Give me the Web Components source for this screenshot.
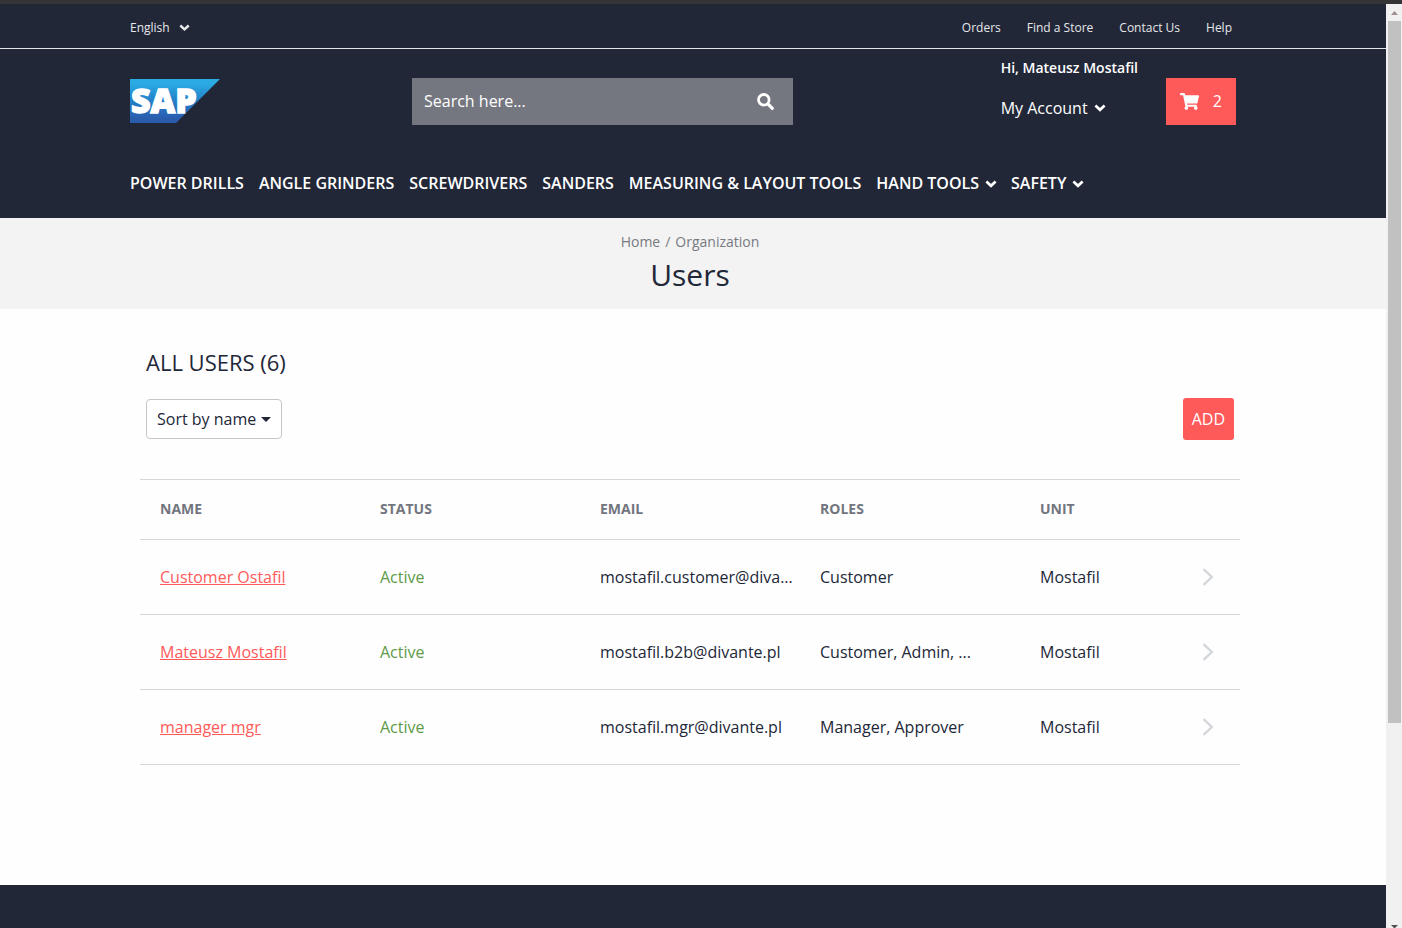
<!DOCTYPE html>
<html lang="en">
<head>
<meta charset="utf-8">
<meta name="viewport" content="width=device-width, initial-scale=1">
<title>Users</title>
<style>
  body {
    margin: 0;
    background: #fefefe;
    color: #222738;
    font: 400 16px/24px "Open Sans", "Noto Sans", sans-serif;
    --dark: #222738;
    --accent: #ff5a5a;
    --line: #d3d6db;
    --page: 1120px;
    --trim: 6px;
  }
</style>
</head>
<body>
<store-app></store-app>

<script>
const define = (name, html) => {
  const template = document.createElement('template');
  template.innerHTML = html;
  customElements.define(name, class extends HTMLElement {
    constructor() {
      super();
      this.attachShadow({ mode: 'open' }).append(template.content.cloneNode(true));
    }
  });
};

define('icon-chevron', `
<style>
  :host { display: inline-flex; flex: none; width: 12px; }
  svg { display: block; width: 100%; }
</style>
<svg viewBox="0 0 12 8" aria-hidden="true"><path d="M1.4 1.6 6 5.8 10.6 1.6" fill="none" stroke="currentColor" stroke-width="2.7"/></svg>`);

define('sap-logo', `
<style>
  :host { display: block; }
  a, svg { display: block; width: 90px; height: 44px; overflow: visible; }
  text { font: 800 34px "Open Sans", sans-serif; }
</style>
<a href="#" aria-label="Home">
<svg viewBox="0 0 90 44">
  <defs><linearGradient id="g" x1="0" y1="0" x2="0" y2="1">
    <stop offset="0.1" stop-color="#2aabe4"/><stop offset="0.5" stop-color="#2380c8"/><stop offset="0.9" stop-color="#2a5cae"/>
  </linearGradient></defs>
  <path d="M0 0H90L46 44H0Z" fill="url(#g)"/>
  <text x="1" y="34" fill="#fff" stroke="#fff" stroke-width="1.4">SAP</text>
</svg></a>`);

define('top-bar', `
<style>
  :host { display: block; padding-right: var(--trim); border-bottom: 1px solid #e4e5e8; font-size: 12px; line-height: 20px; color: #e6e7ea; }
  .row { display: flex; align-items: center; max-width: var(--page); height: 44px; margin: 0 auto; padding-top: 4px; box-sizing: border-box; }
  .lang { display: grid; align-items: center; }
  .lang > * { grid-area: 1 / 1; }
  .lang icon-chevron { justify-self: end; width: 11px; pointer-events: none; }
  select { appearance: none; border: 0; padding: 0 20px 0 0; background: none; color: inherit; font: inherit; }
  option { color: #222738; }
  nav { display: flex; gap: 26px; margin-left: auto; padding-right: 18px; }
  a { color: inherit; text-decoration: none; }
</style>
<div class="row">
  <div class="lang">
    <select aria-label="Language"><option>English</option></select>
    <icon-chevron></icon-chevron>
  </div>
  <nav aria-label="Service">
    <a href="#">Orders</a><a href="#">Find a Store</a><a href="#">Contact Us</a><a href="#">Help</a>
  </nav>
</div>`);

define('search-box', `
<style>
  :host { display: block; }
  form { display: flex; height: 47px; background: #757780; }
  input { flex: 1; min-width: 0; border: 0; padding: 0 12px 2px; background: none; color: #fff; font: inherit; outline: 0; }
  input::placeholder { color: #fff; opacity: 1; }
  button { width: 55px; border: 0; padding: 0; background: none; color: #fff; display: grid; place-items: center; }
  svg { width: 17px; height: 17px; }
</style>
<form role="search">
  <input type="text" placeholder="Search here..." aria-label="Search">
  <button type="button" aria-label="Search">
    <svg viewBox="0 0 17 17"><circle cx="6.8" cy="6.8" r="5.3" fill="none" stroke="currentColor" stroke-width="2.8"/><path d="m11 11 4.3 4.3" stroke="currentColor" stroke-width="3.2" stroke-linecap="round"/></svg>
  </button>
</form>`);

define('account-menu', `
<style>
  :host { display: block; color: #fff; }
  strong { display: block; font-weight: 600; font-size: 14px; }
  button { display: flex; align-items: center; gap: 6px; margin-top: 16px; border: 0; padding: 0; background: none; color: inherit; font: inherit; }
</style>
<strong><slot></slot></strong>
<button type="button">My Account <icon-chevron></icon-chevron></button>`);

define('mini-cart', `
<style>
  :host { display: block; }
  a { display: flex; align-items: center; justify-content: space-between; box-sizing: border-box; width: 70px; height: 47px; padding: 0 14px 1px; background: var(--accent); color: #fff; text-decoration: none; }
  svg { width: 19px; height: 17px; }
</style>
<a href="#" aria-label="Cart">
  <svg viewBox="0 0 576 512"><path fill="currentColor" d="M528.12 301.319l47.273-208C578.806 78.301 567.391 64 551.99 64H159.208l-9.166-44.81C147.758 8.021 137.93 0 126.529 0H24C10.745 0 0 10.745 0 24v16c0 13.255 10.745 24 24 24h69.883l70.248 343.435C147.325 417.1 136 435.222 136 456c0 30.928 25.072 56 56 56s56-25.072 56-56c0-15.674-6.447-29.835-16.824-40h209.647C430.447 426.165 424 440.326 424 456c0 30.928 25.072 56 56 56s56-25.072 56-56c0-22.172-12.888-41.332-31.579-50.405l5.517-24.276c3.413-15.018-8.002-29.319-23.403-29.319H218.117l-6.545-32h293.145c11.206 0 20.92-7.754 23.403-18.681z"/></svg>
  <span><slot></slot></span>
</a>`);

define('category-nav', `
<style>
  :host { display: block; color: #fff; font-weight: 600; }
  nav { display: flex; flex-wrap: wrap; gap: 0 15px; }
  a { display: flex; align-items: center; gap: 6px; color: inherit; text-decoration: none; }
  icon-chevron { margin-right: -1px; padding-top: 2px; }
</style>
<nav aria-label="Categories">
  <a href="#">POWER DRILLS</a><a href="#">ANGLE GRINDERS</a><a href="#">SCREWDRIVERS</a><a href="#">SANDERS</a>
  <a href="#">MEASURING &amp; LAYOUT TOOLS</a>
  <a href="#">HAND TOOLS <icon-chevron></icon-chevron></a><a href="#">SAFETY <icon-chevron></icon-chevron></a>
</nav>`);

define('store-header', `
<style>
  :host { display: block; background: var(--dark); }
  .body { padding-right: var(--trim); }
  .wrap { max-width: var(--page); margin: 0 auto; padding: 7px 0 23px; }
  .row { display: flex; align-items: flex-start; padding-right: 14px; }
  sap-logo { flex: 0 0 282px; padding-top: 23px; }
  search-box { flex: 0 1 381px; padding-top: 22px; }
  account-menu { margin-left: auto; }
  mini-cart { margin-left: 28px; padding-top: 22px; }
  category-nav { margin-top: 46px; }
</style>
<top-bar></top-bar>
<div class="body"><div class="wrap">
  <div class="row">
    <sap-logo></sap-logo>
    <search-box></search-box>
    <account-menu>Hi, Mateusz Mostafil</account-menu>
    <mini-cart>2</mini-cart>
  </div>
  <category-nav></category-nav>
</div></div>`);

define('page-title', `
<style>
  :host { display: block; padding: 14px var(--trim) 13px 0; background: #f3f3f3; text-align: center; }
  nav { display: flex; justify-content: center; gap: 5px; font-size: 14px; line-height: 20px; color: #777a81; }
  a { color: inherit; text-decoration: none; }
  h1 { margin: 2px 0 0; font-size: 30px; line-height: 42px; font-weight: 400; }
</style>
<nav aria-label="Breadcrumb"><a href="#">Home</a><span>/</span><a href="#">Organization</a></nav>
<h1><slot></slot></h1>`);

define('list-toolbar', `
<style>
  :host { display: block; padding: 0 6px; }
  h2 { margin: 0; font-size: 22px; line-height: 32px; font-weight: 400; }
  .row { display: flex; align-items: center; justify-content: space-between; margin-top: 20px; }
  .sort { display: grid; align-items: center; }
  .sort > * { grid-area: 1 / 1; }
  select { appearance: none; height: 40px; border: 1px solid #c4c6cb; border-radius: 4px; padding: 0 24px 0 10px; background: #fff; color: inherit; font: inherit; }
  svg { justify-self: end; width: 10px; height: 5px; margin-right: 11px; pointer-events: none; }
  button { height: 42px; border: 0; border-radius: 3px; padding: 0 9px; background: var(--accent); color: #fff; font: inherit; }
</style>
<h2><slot></slot></h2>
<div class="row">
  <div class="sort">
    <select aria-label="Sort"><option>Sort by name</option></select>
    <svg viewBox="0 0 10 5" aria-hidden="true"><path d="M0 0H10L5 5Z" fill="#222738"/></svg>
  </div>
  <button type="button">ADD</button>
</div>`);

customElements.define('user-table', class extends HTMLElement {
  connectedCallback() {
    const users = [
      ['Customer Ostafil', 'mostafil.customer@diva...', 'Customer'],
      ['Mateusz Mostafil', 'mostafil.b2b@divante.pl', 'Customer, Admin, ...'],
      ['manager mgr', 'mostafil.mgr@divante.pl', 'Manager, Approver']
    ];
    const rows = users.map(([name, email, roles]) => `
      <tr><td><a href="#">${name}</a></td><td class="active">Active</td><td>${email}</td><td>${roles}</td><td>Mostafil</td>
      <td class="go"><a href="#" aria-label="Open ${name}"><svg viewBox="0 0 12 18"><path d="m1.5 1.2 8.3 7.8-8.3 7.8" fill="none" stroke="#d3d6db" stroke-width="2.4"/></svg></a></td></tr>`).join('');
    this.attachShadow({ mode: 'open' }).innerHTML = `
<style>
  :host { display: block; }
  table { width: 100%; table-layout: fixed; border-collapse: collapse; border-top: 1px solid var(--line); }
  tr { border-bottom: 1px solid var(--line); }
  th, td { padding: 0 0 0 20px; text-align: left; white-space: nowrap; }
  th { width: 20%; height: 60px; padding-bottom: 2px; box-sizing: border-box; font-size: 14px; font-weight: 700; color: #72757e; }
  th:nth-child(5) { width: auto; }
  th:last-child { width: 58px; }
  td { height: 74px; }
  a { color: var(--accent); }
  .active { color: #5f9a48; }
  .go a, svg { display: block; width: 12px; height: 18px; }
</style>
<table>
  <thead><tr><th>NAME</th><th>STATUS</th><th>EMAIL</th><th>ROLES</th><th>UNIT</th><th></th></tr></thead>
  <tbody>${rows}</tbody>
</table>`;
  }
});

define('page-scrollbar', `
<style>
  :host { display: flex; flex-direction: column; align-items: center; flex: none; width: 16px; background: #f1f1f1; }
  svg { display: block; flex: none; }
  .up { width: 7px; height: 4px; margin: 7px 0 6px; }
  .track { flex: 1; width: 13px; }
  .thumb { height: 77.6%; background: #c1c1c1; }
  .down { width: 7px; height: 3px; }
</style>
<svg class="up" viewBox="0 0 7 4"><path d="M0 4 3.5 0 7 4Z" fill="#a38f8f"/></svg>
<div class="track"><div class="thumb"></div></div>
<svg class="down" viewBox="0 0 7 3"><path d="M0 0H7L4 3H3Z" fill="#505050"/></svg>`);

define('store-app', `
<style>
  :host { display: flex; box-sizing: border-box; min-height: 100vh; border-top: 4px solid #353537; }
  .page { flex: 1; min-width: 0; display: flex; flex-direction: column; }
  main { padding: 37px var(--trim) 0 0; }
  .wrap { max-width: 1100px; margin: 0 auto; }
  user-table { margin: 39px 0 120px; }
  footer { flex: 1; min-height: 40px; background: var(--dark); }
</style>
<div class="page">
  <store-header></store-header>
  <page-title>Users</page-title>
  <main><div class="wrap">
    <list-toolbar>ALL USERS (6)</list-toolbar>
    <user-table></user-table>
  </div></main>
  <footer></footer>
</div>
<page-scrollbar></page-scrollbar>`);
</script>
</body>
</html>
